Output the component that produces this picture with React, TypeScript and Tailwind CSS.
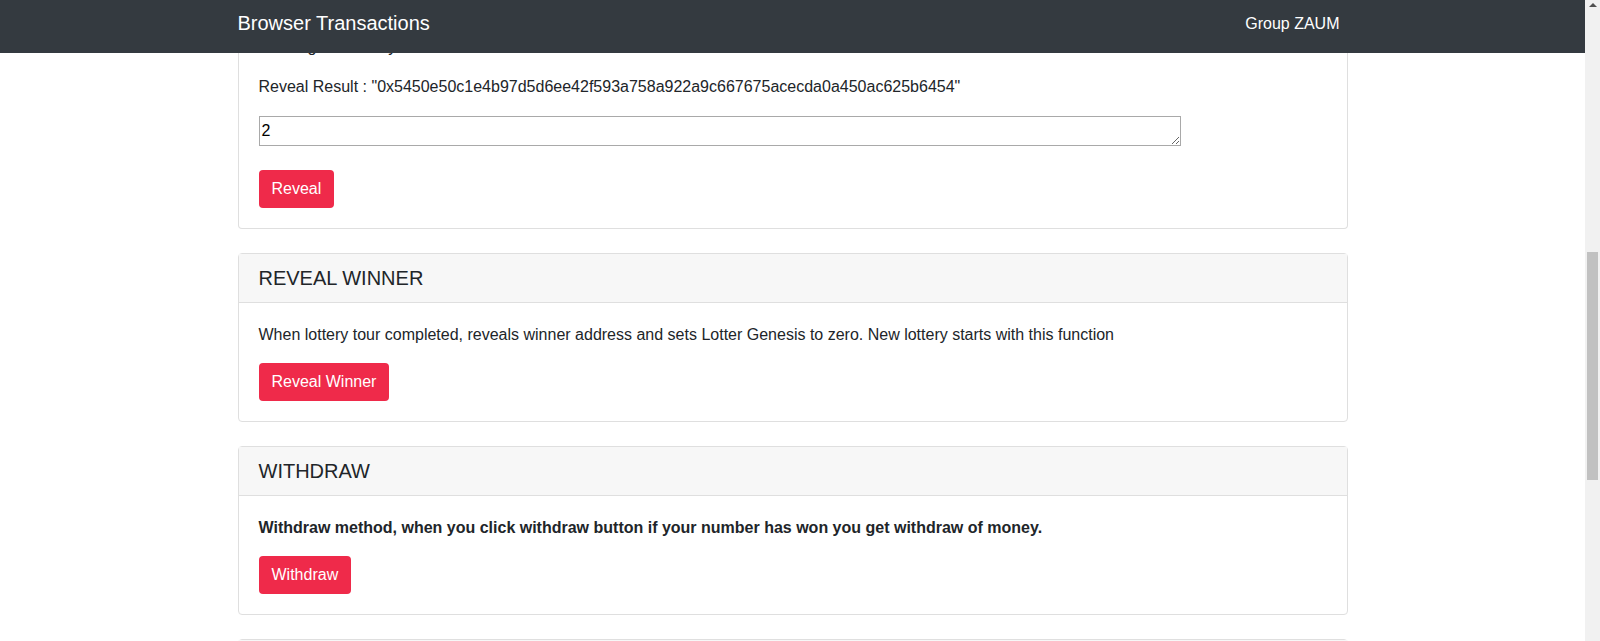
import React from "react";

const RevealResult = "0x5450e50c1e4b97d5d6ee42f593a758a922a9c667675acecda0a450ac625b6454";

const Button: React.FC<{ label: string }> = ({ label }) => (
  <button
    type="button"
    className="rounded border border-transparent bg-[#ef2a4a] px-3 py-1.5 text-base leading-6 text-white"
  >
    {label}
  </button>
);

const Card: React.FC<{ title: string; children: React.ReactNode }> = ({ title, children }) => (
  <div className="mt-6 rounded border border-[#dfdfdf] bg-white">
    <div className="border-b border-[#dfdfdf] bg-[#f7f7f7] px-5 py-3 text-[20px] leading-6">{title}</div>
    <div className="p-5">{children}</div>
  </div>
);

const Scrollbar: React.FC = () => (
  <div className="flex w-[15px] shrink-0 flex-col bg-[#f1f1f1]">
    <div className="flex h-[15px] items-start justify-center pt-[3px]">
      <svg width="8" height="4" viewBox="0 0 8 4">
        <path d="M0 4 L4 0 L8 4 Z" fill="#505050" />
      </svg>
    </div>
    <div className="h-[237px]" />
    <div className="mx-[2px] h-[228px] bg-[#c1c1c1]" />
  </div>
);

export default function App() {
  return (
    <div className="flex h-[641px] overflow-hidden bg-white font-['Liberation_Sans',Arial,sans-serif] text-base leading-6 text-[#212529]">
      <div className="flex min-w-0 flex-1 flex-col">
        <nav className="h-[53px] shrink-0 bg-[#343a40]">
          <div className="mx-auto flex h-full w-[1140px] items-start justify-between px-[15px] text-white">
            <span className="mt-[8px] text-[20px] leading-[30px]">Browser Transactions</span>
            <span className="mt-[12px] px-2 leading-6">Group ZAUM</span>
          </div>
        </nav>

        <div className="min-h-0 flex-1 overflow-hidden">
          <div className="mx-auto w-[1140px] px-[15px]">
            {/* first card is scrolled up under the navbar */}
            <div className="-mt-[18px] rounded-b border border-t-0 border-[#dfdfdf] bg-white px-5 pb-5">
              <p className="mb-4">Winning number by the current hash</p>
              <p className="mb-[17px]">Reveal Result : "{RevealResult}"</p>
              <textarea
                rows={1}
                defaultValue="2"
                className="block h-[30px] w-[922px] border border-[#a9a9a9] px-[2px] py-[2px] text-base leading-6 text-black"
              />
              <div className="mt-6">
                <Button label="Reveal" />
              </div>
            </div>

            <Card title="REVEAL WINNER">
              <p className="mb-4">
                When lottery tour completed, reveals winner address and sets Lotter Genesis to zero. New lottery starts
                with this function
              </p>
              <Button label="Reveal Winner" />
            </Card>

            <Card title="WITHDRAW">
              <p className="mb-4 font-bold">
                Withdraw method, when you click withdraw button if your number has won you get withdraw of money.
              </p>
              <Button label="Withdraw" />
            </Card>

            <Card title="CHECK BALANCE">
              <p className="mb-4">Shows the balance of the lottery contract.</p>
              <Button label="Check" />
            </Card>
          </div>
        </div>
      </div>
      <Scrollbar />
    </div>
  );
}
